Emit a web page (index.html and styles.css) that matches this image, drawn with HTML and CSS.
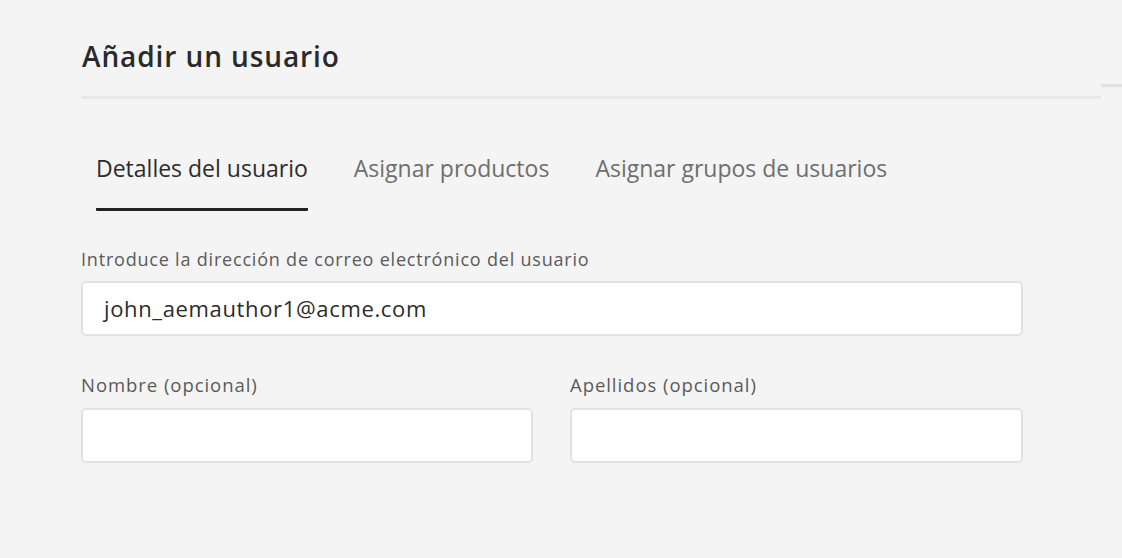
FILE: index.html
```html
<!DOCTYPE html>
<html lang="es">
<head>
<meta charset="utf-8">
<title>Añadir un usuario</title>
<link rel="stylesheet" href="styles.css">
</head>
<body>
<div class="page">
  <header class="header">
    <h1 class="title">Añadir un usuario</h1>
  </header>
  <div class="rule-row">
    <div class="rule"></div>
    <div class="rule-edge"></div>
  </div>
  <nav class="tabs">
    <div class="tab active">Detalles del usuario</div>
    <div class="tab">Asignar productos</div>
    <div class="tab">Asignar grupos de usuarios</div>
  </nav>
  <form class="form">
    <div class="field">
      <label class="label">Introduce la dirección de correo electrónico del usuario</label>
      <div class="input input-email">john_aemauthor1@acme.com</div>
    </div>
    <div class="row">
      <div class="field">
        <label class="label short">Nombre (opcional)</label>
        <div class="input"></div>
      </div>
      <div class="field">
        <label class="label short">Apellidos (opcional)</label>
        <div class="input"></div>
      </div>
    </div>
  </form>
</div>
</body>
</html>
```

FILE: styles.css
```css
html, body {
  margin: 0;
  padding: 0;
  background: #f4f4f4;
}
body {
  font-family: "Open Sans", "Noto Sans", sans-serif;
  color: #2c2c2c;
  width: 1122px;
  height: 558px;
  overflow: hidden;
}
.page {
  padding: 36px 0 0 81px;
}
.header {
  padding-left: 1px;
}
.title {
  margin: 0;
  font-size: 28px;
  font-weight: 600;
  letter-spacing: 0.9px;
  line-height: 40px;
  color: #2a2a2a;
}
.rule-row {
  display: flex;
  align-items: flex-start;
  margin-top: 8px;
}
.rule {
  width: 1020px;
  height: 3px;
  margin-top: 12px;
  background: #e8e8e8;
}
.rule-edge {
  flex: 1;
  height: 3px;
  background: #e1e1e1;
}
.tabs {
  display: flex;
  gap: 46px;
  padding-left: 15px;
  margin-top: 53px;
}
.tab {
  font-size: 23px;
  line-height: 32px;
  color: #6e6e6e;
  padding-bottom: 24px;
}
.tab.active {
  color: #2c2c2c;
  border-bottom: 3px solid #222;
  border-radius: 1px;
}
.form {
  width: 942px;
  margin-top: 36px;
  display: flex;
  flex-direction: column;
  gap: 37px;
}
.field {
  display: flex;
  flex-direction: column;
  gap: 10px;
}
.row .field {
  gap: 11px;
}
.label {
  font-size: 18px;
  line-height: 24px;
  letter-spacing: 0.8px;
  color: #5a5a5a;
}
.label.short {
  font-size: 18.5px;
  letter-spacing: 0.95px;
}
.input {
  box-sizing: border-box;
  height: 55px;
  background: #fff;
  border: 2px solid #e2e2e2;
  border-radius: 5px;
}
.input-email {
  font-size: 22px;
  letter-spacing: 0.65px;
  line-height: 50px;
  color: #2c2c2c;
  padding-left: 21px;
}
.row {
  display: grid;
  grid-template-columns: 452px 453px;
  gap: 37px;
}
```
